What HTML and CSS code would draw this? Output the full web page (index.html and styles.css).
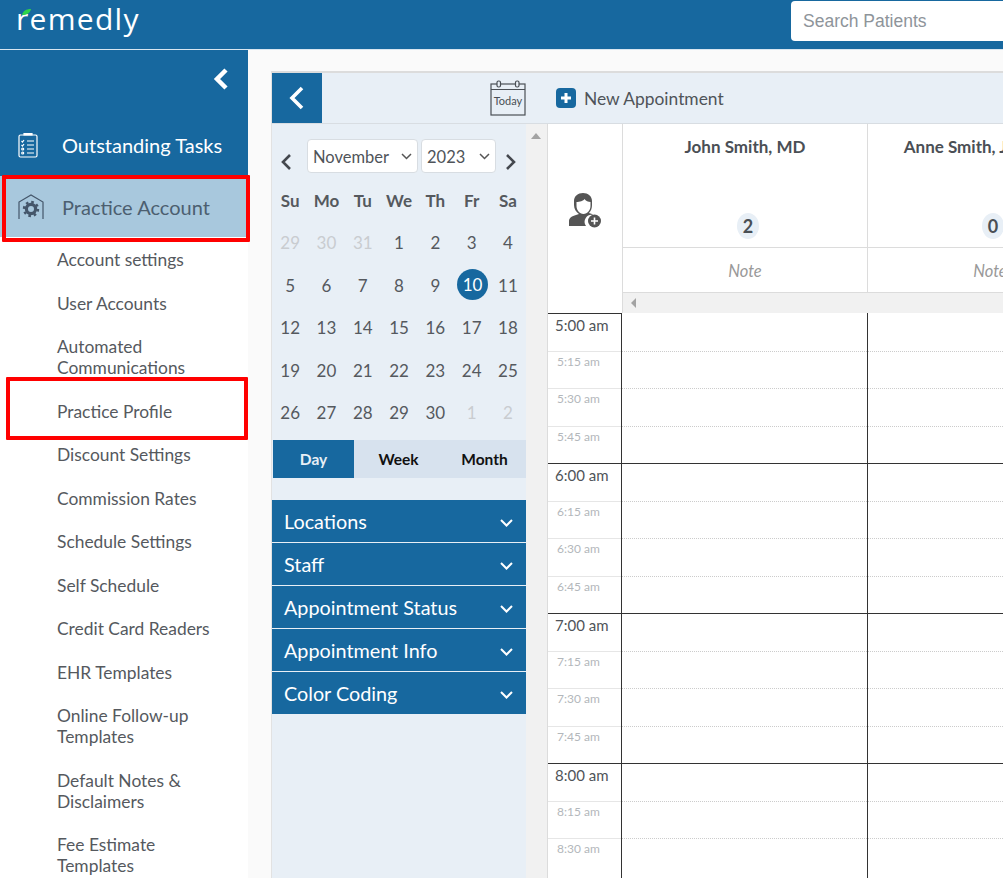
FILE: index.html
```html
<!DOCTYPE html>
<html lang="en">
<head>
<meta charset="utf-8">
<title>Remedly</title>
<link rel="stylesheet" href="styles.css">
</head>
<body>
<header class="topbar">
  <div class="logo"><span class="logo-r">r<svg class="leaf" width="9" height="6" viewBox="0 0 9 6"><path d="M0 6C1 2 4 0 9 0 8 4 5 6 0 6Z" fill="#2fd34a"/></svg></span>emedly</div>
  <div class="search">Search Patients</div>
</header>
<div class="app">
  <aside class="sidebar">
    <div class="side-blue">
      <div class="collapse"><svg width="16" height="22" viewBox="0 0 16 22"><path d="M13 2 4 11l9 9" fill="none" stroke="#fff" stroke-width="4.5"/></svg></div>
      <div class="side-item">
        <svg class="side-icon" width="20" height="26" viewBox="0 0 20 26" fill="none" stroke="#fff" stroke-width="1.2"><rect x="1" y="3" width="18" height="22" rx="1.5"/><path d="M6 3V1.5h8V3z" fill="#fff"/><path d="M9 9h7M9 13h7M9 17h7M9 21h7M3.5 9l1 1 1.5-2M3.5 13l1 1 1.5-2"/><circle cx="4.7" cy="17" r="1"/><circle cx="4.7" cy="21" r="1"/></svg>
        <span>Outstanding Tasks</span>
      </div>
    </div>
    <div class="side-active">
      <svg class="side-icon" width="26" height="26" viewBox="0 0 26 26" fill="none"><path d="M1 25V8L13 1l12 7v17" stroke="#44566a" stroke-width="1.2"/><circle cx="13" cy="15" r="4.6" fill="none" stroke="#44566a" stroke-width="3.2"/><circle cx="13" cy="15" r="7" fill="none" stroke="#44566a" stroke-width="2.4" stroke-dasharray="2.6 2.9"/></svg>
      <span>Practice Account</span>
    </div>
    <nav class="sub">
      <a class="sub-link">Account settings</a>
      <a class="sub-link">User Accounts</a>
      <a class="sub-link">Automated Communications</a>
      <a class="sub-link">Practice Profile</a>
      <a class="sub-link">Discount Settings</a>
      <a class="sub-link">Commission Rates</a>
      <a class="sub-link">Schedule Settings</a>
      <a class="sub-link">Self Schedule</a>
      <a class="sub-link">Credit Card Readers</a>
      <a class="sub-link">EHR Templates</a>
      <a class="sub-link">Online Follow-up Templates</a>
      <a class="sub-link">Default Notes &amp; Disclaimers</a>
      <a class="sub-link">Fee Estimate Templates</a>
    </nav>
  </aside>
  <main class="main">
    <section class="panel">
      <div class="toolbar">
        <button class="back"><svg width="16" height="24" viewBox="0 0 16 24"><path d="M13 2 3 12l10 10" fill="none" stroke="#fff" stroke-width="3.600"/></svg></button>
        <div class="today">
          <svg width="36" height="36" viewBox="0 0 36 36" fill="none" stroke="#4a4f55" stroke-width="1.2"><rect x="1" y="4" width="34" height="31"/><path d="M1 9.500h34" /><rect x="7" y="1" width="3.500" height="6" rx="1.500" fill="#e8eff6"/><rect x="25.500" y="1" width="3.500" height="6" rx="1.500" fill="#e8eff6"/></svg>
          <span>Today</span>
        </div>
        <div class="new-appt">
          <span class="plus"><svg width="12" height="12" viewBox="0 0 12 12"><path d="M6 1v10M1 6h10" stroke="#fff" stroke-width="3"/></svg></span>
          New Appointment
        </div>
      </div>
      <div class="panel-body">
        <div class="left">
          <div class="cal-head">
            <svg class="nav-arrow" width="12" height="18" viewBox="0 0 12 18"><path d="M10 2 3 9l7 7" fill="none" stroke="#44484e" stroke-width="2.600"/></svg>
            <div class="sel sel-m">November<svg width="11" height="7" viewBox="0 0 11 7"><path d="M1 1l4.500 4.500L10 1" fill="none" stroke="#555" stroke-width="1.500"/></svg></div>
            <div class="sel sel-y">2023<svg width="11" height="7" viewBox="0 0 11 7"><path d="M1 1l4.500 4.500L10 1" fill="none" stroke="#555" stroke-width="1.500"/></svg></div>
            <svg class="nav-arrow" width="12" height="18" viewBox="0 0 12 18"><path d="M2 2l7 7-7 7" fill="none" stroke="#44484e" stroke-width="2.600"/></svg>
          </div>
          <div class="cal-grid">
            <b>Su</b><b>Mo</b><b>Tu</b><b>We</b><b>Th</b><b>Fr</b><b>Sa</b>
            <i class="off">29</i><i class="off">30</i><i class="off">31</i><i>1</i><i>2</i><i>3</i><i>4</i>
            <i>5</i><i>6</i><i>7</i><i>8</i><i>9</i><i class="sel-day"><span>10</span></i><i>11</i>
            <i>12</i><i>13</i><i>14</i><i>15</i><i>16</i><i>17</i><i>18</i>
            <i>19</i><i>20</i><i>21</i><i>22</i><i>23</i><i>24</i><i>25</i>
            <i>26</i><i>27</i><i>28</i><i>29</i><i>30</i><i class="off">1</i><i class="off">2</i>
          </div>
          <div class="views"><span class="view on">Day</span><span class="view">Week</span><span class="view">Month</span></div>
          <div class="acc">
            <div class="acc-row">Locations<svg width="13" height="8" viewBox="0 0 13 8"><path d="M1 1l5.500 5.500L12 1" fill="none" stroke="#fff" stroke-width="2"/></svg></div>
            <div class="acc-row">Staff<svg width="13" height="8" viewBox="0 0 13 8"><path d="M1 1l5.500 5.500L12 1" fill="none" stroke="#fff" stroke-width="2"/></svg></div>
            <div class="acc-row">Appointment Status<svg width="13" height="8" viewBox="0 0 13 8"><path d="M1 1l5.500 5.500L12 1" fill="none" stroke="#fff" stroke-width="2"/></svg></div>
            <div class="acc-row">Appointment Info<svg width="13" height="8" viewBox="0 0 13 8"><path d="M1 1l5.500 5.500L12 1" fill="none" stroke="#fff" stroke-width="2"/></svg></div>
            <div class="acc-row">Color Coding<svg width="13" height="8" viewBox="0 0 13 8"><path d="M1 1l5.500 5.500L12 1" fill="none" stroke="#fff" stroke-width="2"/></svg></div>
          </div>
        </div>
        <div class="scroll"><span class="scroll-up"></span></div>
        <div class="sched">
          <div class="sched-head">
            <div class="corner">
              <svg width="34" height="36" viewBox="0 0 34 36"><path d="M1 34v-5c0-3 3-5 7-6l3-1c-3-2-5-5-5-9V9c0-5 4-8 9-8s9 3 9 8v4c0 3-1 6-3 8l3 1 1 1a7 7 0 0 0-7 11H3c-1 0-2 0-2 0z" fill="#555"/><path d="M8.500 10c3 0 7-1 8-3 1 2 4 3 6 3v4c0 4-3 8-7 8s-7-4-7-8z" fill="#fff"/><circle cx="26.500" cy="29" r="6.500" fill="#555"/><path d="M26.500 25.500v7M23 29h7" stroke="#fff" stroke-width="1.600"/></svg>
            </div>
            <div class="col-heads">
              <div class="doc">
                <div class="doc-name">John Smith, MD</div>
                <div class="badge">2</div>
                <div class="doc-note">Note</div>
              </div>
              <div class="doc">
                <div class="doc-name">Anne Smith, Jr. MSN-C</div>
                <div class="badge">0</div>
                <div class="doc-note">Note</div>
              </div>
              <div class="hscroll"><span class="hscroll-l"></span></div>
            </div>
          </div>
          <div class="grid">
            <div class="hour"><div class="slot hr"><span>5:00 am</span></div><div class="slot"><span>5:15 am</span></div><div class="slot"><span>5:30 am</span></div><div class="slot"><span>5:45 am</span></div></div>
            <div class="hour"><div class="slot hr"><span>6:00 am</span></div><div class="slot"><span>6:15 am</span></div><div class="slot"><span>6:30 am</span></div><div class="slot"><span>6:45 am</span></div></div>
            <div class="hour"><div class="slot hr"><span>7:00 am</span></div><div class="slot"><span>7:15 am</span></div><div class="slot"><span>7:30 am</span></div><div class="slot"><span>7:45 am</span></div></div>
            <div class="hour"><div class="slot hr"><span>8:00 am</span></div><div class="slot"><span>8:15 am</span></div><div class="slot"><span>8:30 am</span></div></div>
          </div>
        </div>
      </div>
    </section>
  </main>
</div>
<div class="mark mark-a"></div>
<div class="mark mark-b"></div>
</body>
</html>
```
FILE: styles.css
```css
* { box-sizing: border-box; }
html, body { margin: 0; height: 878px; overflow: hidden; }
body { width: 1003px; font-family: Lato, "Open Sans", sans-serif; color: #4a4f55; background: #fff; position: relative; }
.topbar { height: 50px; background: #17689f; border-bottom: 1px solid #d9e6f0; display: flex; justify-content: space-between; padding-left: 16px; }
.logo { color: #fff; font-family: "Open Sans", sans-serif; font-size: 30px; letter-spacing: 1.300px; line-height: 38px; }
.logo-r { position: relative; }
.leaf { position: absolute; left: 6px; top: 11px; }
.search { width: 240px; height: 40px; margin-top: 1px; margin-right: -28px; background: #fff; border-radius: 4px; color: #8e949a; font-family: "Liberation Sans", sans-serif; font-size: 17.500px; line-height: 40px; padding-left: 12px; }
.app { display: flex; height: 828px; }
.sidebar { width: 248px; flex: none; }
.side-blue { height: 126px; background: #17689f; }
.collapse { height: 70px; display: flex; justify-content: flex-end; padding: 18px 19px 0 0; }
.side-item { display: flex; align-items: center; gap: 24px; padding-left: 18px; color: #fff; font-size: 20px; height: 50px; }
.side-active { height: 62px; background: #a8c8dd; display: flex; align-items: center; color: #4c5f70; font-size: 20px; padding-left: 18px; gap: 18px; border-bottom: 1px solid #fff; }
.sub { padding: 0 20px 0 57px; }
.sub-link { display: block; font-size: 17.400px; line-height: 21px; color: #55595e; padding: 11px 0 11.500px; }
.main { flex: 1; padding: 21px 0 0 23px; min-width: 0; background: #fafafa; }
.panel { width: 760px; height: 807px; background: #e8eff6; border-top: 2px solid #dcdcdc; border-left: 1px solid #e2e2e2; }
.toolbar { height: 51px; display: flex; align-items: center; border-bottom: 1px solid #d8dde2; }
.back { width: 50px; height: 50px; background: #17689f; border: 0; padding: 0; display: flex; align-items: center; justify-content: center; flex: none; }
.today { position: relative; margin-left: 168px; width: 36px; height: 36px; }
.today span { position: absolute; left: 0; right: 0; top: 14px; text-align: center; font-size: 11px; color: #4a4f55; }
.new-appt { display: flex; align-items: center; gap: 8px; margin-left: 30px; font-size: 17.400px; color: #4f5459; }
.plus { width: 20px; height: 20px; border-radius: 4px; background: #17689f; display: flex; align-items: center; justify-content: center; }
.panel-body { display: flex; height: 754px; }
.left { width: 254px; flex: none; }
.cal-head { display: flex; align-items: center; height: 33px; margin-top: 15px; padding-left: 8px; }
.nav-arrow { flex: none; margin-top: 12px; }
.sel { height: 34px; background: #fff; border: 1px solid #d8dde2; border-radius: 4px; display: flex; align-items: center; justify-content: space-between; padding: 2px 5px 0; font-size: 16.500px; color: #4f5459; }
.sel-m { width: 111px; margin-left: 15px; }
.sel-y { width: 75px; margin-left: 3px; margin-right: 9px; }
.cal-grid { display: grid; grid-template-columns: repeat(7, 36.300px); grid-auto-rows: 42.500px; margin-top: 7px; }
.cal-grid b, .cal-grid i { display: flex; align-items: center; justify-content: center; font-style: normal; font-size: 17px; color: #55595e; }
.cal-grid b { font-weight: 700; }
.cal-grid .off { color: #c9ccd0; }
.sel-day span { width: 31px; height: 31px; border-radius: 50%; background: #17689f; color: #fff; display: flex; align-items: center; justify-content: center; transform: translate(1px, -1px); }
.views { display: flex; height: 38px; background: #d7e2ee; margin: 6px 0 0 1px; }
.view { flex: 1; display: flex; align-items: center; justify-content: center; font-size: 15.500px; font-weight: 700; color: #111; padding-left: 3px; }
.view.on { width: 81px; flex: none; background: #17689f; color: #e8eff6; padding-left: 0; }
.acc { margin-top: 22px; }
.acc-row { height: 43px; background: #17689f; border-bottom: 1px solid #e8eff6; color: #fff; font-size: 19.800px; display: flex; align-items: center; justify-content: space-between; padding: 0 13px 0 12px; }
.acc-row svg { margin-top: 4px; }
.acc-row:last-child { height: 42px; border-bottom: 0; }
.scroll { width: 21px; background: #f1f1f1; flex: none; position: relative; }
.scroll-up { position: absolute; left: 5px; top: 9px; border: 5px solid transparent; border-top: 0; border-bottom: 6px solid #a3a3a3; }
.sched { width: 800px; background: #fff; flex: none; border-left: 1px solid #dcdcdc; }
.sched-head { display: flex; height: 189px; }
.corner { width: 75px; flex: none; display: flex; justify-content: center; padding-top: 68px; border-right: 1px solid #dcdcdc; }
.col-heads { display: grid; grid-template-columns: 245px 245px; grid-template-rows: 123px 46px 20px; flex: none; width: 725px; position: relative; }
.doc { display: contents; }
.doc-name { grid-row: 1; font-size: 17px; font-weight: 700; color: #4a4f55; text-align: center; padding-top: 12px; border-right: 1px solid #dcdcdc; white-space: nowrap; }
.badge { position: absolute; top: 89px; width: 22px; height: 26px; border-radius: 50%; background: #e8eff6; font-size: 18px; font-weight: 700; text-align: center; line-height: 26px; }
.doc:nth-child(1) .badge { left: 114px; }
.doc:nth-child(2) .badge { left: 359px; }
.doc-note { grid-row: 2; border-top: 1px solid #dcdcdc; border-bottom: 1px solid #dcdcdc; border-right: 1px solid #dcdcdc; text-align: center; font-style: italic; font-size: 16.500px; line-height: 47px; color: #999; }
.hscroll { grid-row: 3; grid-column: 1 / -1; background: #f1f1f1; position: relative; }
.hscroll-l { position: absolute; left: 8px; top: 5px; border: 5px solid transparent; border-left: 0; border-right: 5px solid #a3a3a3; }
.grid { background-image: linear-gradient(#333, #333), linear-gradient(#333, #333); background-size: 1px 100%; background-repeat: no-repeat; background-position: 319px 0, 73px 0; }
.hour { height: 150px; border-top: 1px solid #333; }
.hour:first-child { border-top-color: transparent; position: relative; }
.hour:first-child::before { content: ""; position: absolute; left: 0; top: -1px; width: 74px; height: 1px; background: #333; }
.slot { height: 37.400px; width: 100%; border-top: 1px dotted #ccc; font-size: 12px; color: #b3b7bb; }
.slot span { display: block; width: 73px; height: 37.400px; margin-top: -1px; border-top: 1px solid #e6e6e6; padding: 2px 0 0 9px; }
.slot.hr { height: 36.800px; border-top: 0; color: #4f5459; font-size: 15px; }
.slot.hr span { height: 36.800px; margin-top: 0; border-top: 0; padding: 2px 0 0 7px; }
.mark { position: absolute; border: 4px solid #f00; border-radius: 1px; }
.mark-a { left: 2px; top: 175px; width: 248px; height: 67px; }
.mark-b { left: 6px; top: 377px; width: 242px; height: 63px; }
```
